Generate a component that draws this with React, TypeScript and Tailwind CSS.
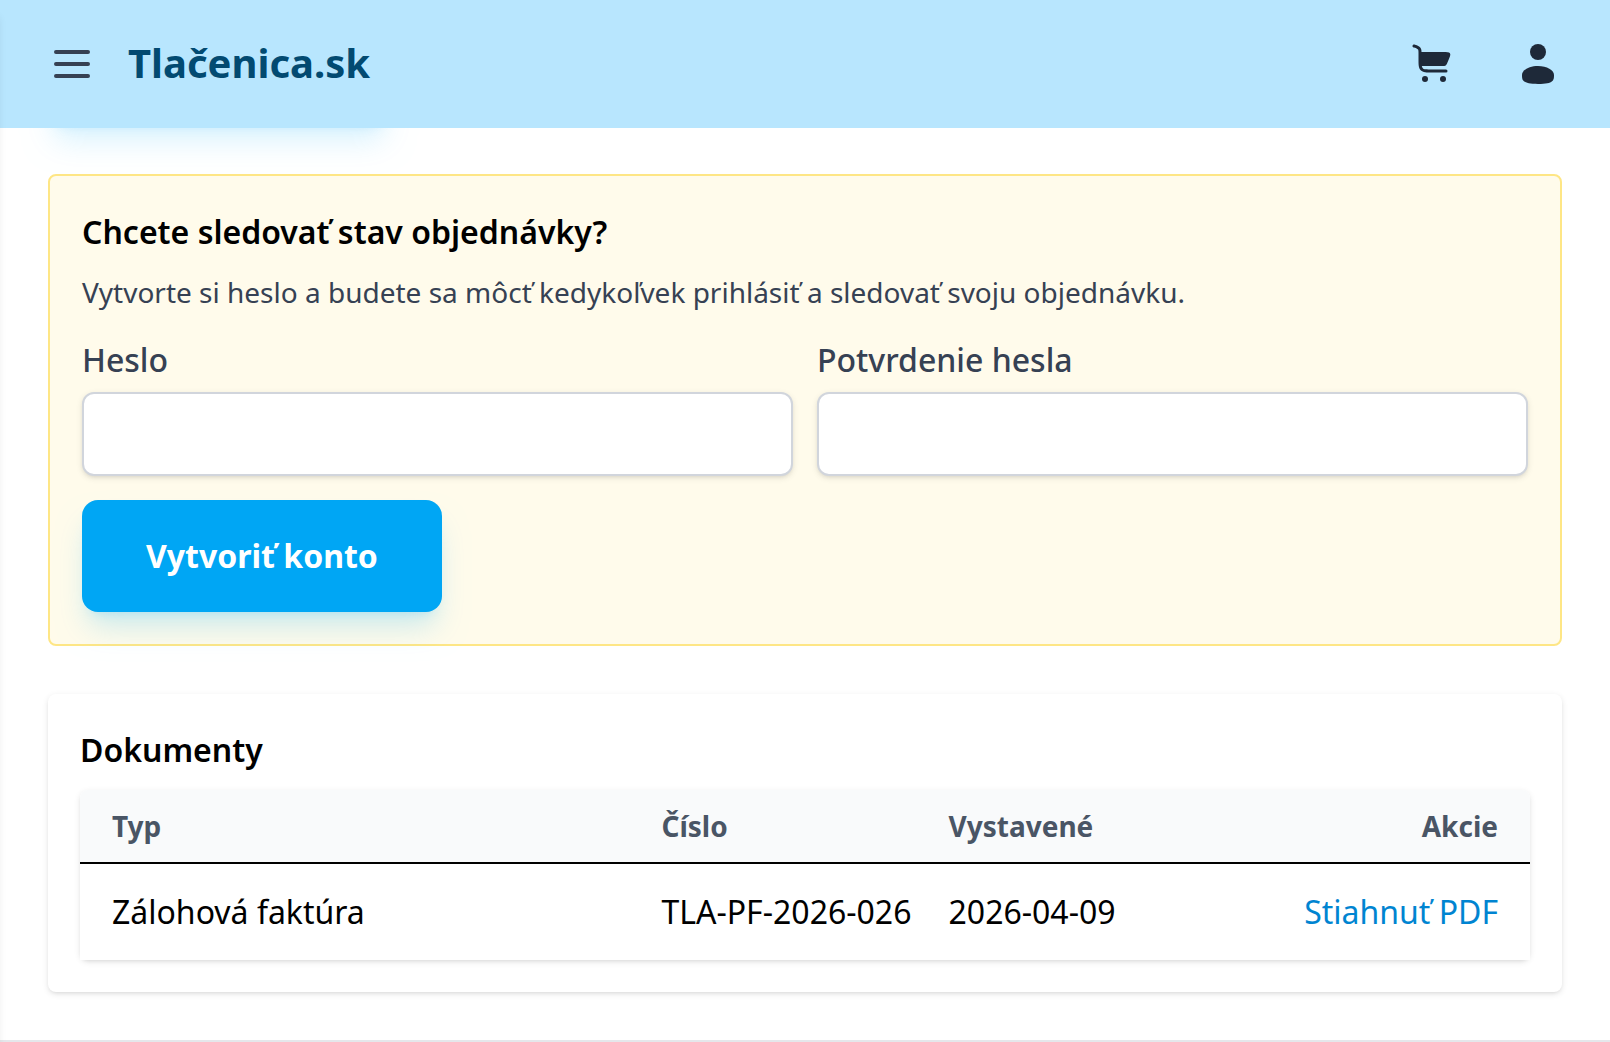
import React, { useState } from "react";

const documents = [
  {
    id: 1,
    type: "Zálohová faktúra",
    number: "TLA-PF-2026-026",
    issued: "2026-04-09",
    href: "#pdf",
  },
];

function MenuIcon() {
  return (
    <svg
      className="size-12"
      viewBox="0 0 24 24"
      fill="none"
      stroke="currentColor"
      strokeWidth="2"
      strokeLinecap="round"
    >
      <path d="M4 6h16M4 12h16M4 18h16" />
    </svg>
  );
}

function CartIcon() {
  return (
    <svg className="size-12" viewBox="0 0 24 24" fill="currentColor">
      <path d="M2.237 2.288a.75.75 0 1 0-.474 1.423l.265.089c.676.225 1.124.376 1.453.529c.312.145.447.262.533.382s.155.284.194.626c.041.361.042.833.042 1.546v2.672c0 1.367 0 2.47.117 3.337c.12.9.38 1.658.982 2.26c.601.602 1.36.86 2.26.981c.866.117 1.969.117 3.336.117H18a.75.75 0 0 0 0-1.5h-7c-1.435 0-2.436-.002-3.192-.103c-.733-.099-1.122-.28-1.399-.556c-.235-.235-.4-.551-.506-1.091h10.12c.959 0 1.438 0 1.814-.248s.565-.688.943-1.57l.428-1c.81-1.89 1.215-2.834.77-3.508S18.506 6 16.45 6H5.745a9 9 0 0 0-.047-.833c-.055-.485-.176-.93-.467-1.333c-.291-.404-.675-.66-1.117-.865c-.417-.194-.946-.37-1.572-.58z" />
      <circle cx="7.5" cy="19.5" r="1.5" />
      <circle cx="16.5" cy="19.5" r="1.5" />
    </svg>
  );
}

function UserIcon() {
  return (
    <svg className="size-12" viewBox="0 0 24 24" fill="currentColor">
      <circle cx="12" cy="6" r="4" />
      <path d="M20 17.5c0 2.485 0 4.5-8 4.5s-8-2.015-8-4.5S7.582 13 12 13s8 2.015 8 4.5" />
    </svg>
  );
}

function Header() {
  return (
    <header className="sticky top-0 z-10 flex h-32 items-center bg-sky-200 px-12">
      <button type="button" aria-label="Menu" className="text-gray-700">
        <MenuIcon />
      </button>
      <a href="#home" className="ml-8 pb-0.5 text-[40px] leading-14 font-bold text-sky-900">
        Tlačenica.sk
      </a>
      <div className="ml-auto flex items-center gap-14 text-gray-800">
        <a href="#cart" aria-label="Košík">
          <CartIcon />
        </a>
        <a href="#account" aria-label="Konto">
          <UserIcon />
        </a>
      </div>
    </header>
  );
}

function PasswordField({ id, label }: { id: string; label: string }) {
  const [value, setValue] = useState("");

  return (
    <div>
      <label htmlFor={id} className="block text-[32px] leading-12 font-medium text-gray-700">
        {label}
      </label>
      <input
        id={id}
        type="password"
        value={value}
        onChange={(e) => setValue(e.target.value)}
        className="mt-2 block h-21 w-full rounded-xl border-2 border-gray-300 bg-white px-6 text-[32px] shadow-[0_2px_6px_rgb(0_0_0/0.1),0_2px_4px_-2px_rgb(0_0_0/0.1)]"
      />
    </div>
  );
}

export default function App() {
  return (
    <div className="min-h-screen bg-white font-['Noto_Sans',sans-serif] text-black">
      {/* closed side menu, only its shadow reaches the page */}
      <div className="fixed inset-y-0 right-full z-20 w-80 bg-white shadow-[0_16px_8px_-1px_rgb(0_0_0/0.08)]" />

      <Header />

      <main className="px-12 pb-12">
        {/* end of the order summary, tucked under the sticky header */}
        <div className="-mt-[114px] h-28 w-[342px] rounded-2xl bg-sky-500 shadow-[0_20px_30px_-6px,0_8px_12px_-8px] shadow-sky-500/15" />

        <section className="mt-12 rounded-lg border-2 border-amber-200 bg-amber-50 p-8">
          <h2 className="text-[32px] leading-12 font-semibold">
            Chcete sledovať stav objednávky?
          </h2>
          <p className="mt-4 text-[28px] leading-10 text-gray-700">
            Vytvorte si heslo a budete sa môcť kedykoľvek prihlásiť a sledovať svoju objednávku.
          </p>
          <form className="mt-6" onSubmit={(e) => e.preventDefault()}>
            <div className="grid grid-cols-2 gap-6">
              <PasswordField id="password" label="Heslo" />
              <PasswordField id="password-confirm" label="Potvrdenie hesla" />
            </div>
            <button
              type="submit"
              className="mt-6 block rounded-2xl bg-sky-500 px-16 py-8 text-[32px] leading-12 font-bold text-white shadow-[0_20px_30px_-6px,0_8px_12px_-8px] shadow-sky-500/20"
            >
              Vytvoriť konto
            </button>
          </form>
        </section>

        <section className="mt-12 rounded-lg bg-white p-8 shadow-[0_2px_6px_rgb(0_0_0/0.1),0_2px_4px_-2px_rgb(0_0_0/0.1)]">
          <h2 className="text-[32px] leading-12 font-semibold">Dokumenty</h2>
          <table className="mt-4 w-full table-fixed border-separate border-spacing-0 rounded-lg text-left shadow-[0_2px_6px_rgb(0_0_0/0.1),0_2px_4px_-2px_rgb(0_0_0/0.1)]">
            <colgroup>
              <col className="w-[40.1%]" />
              <col className="w-[19.8%]" />
              <col className="w-[20%]" />
              <col />
            </colgroup>
            <thead className="text-[28px] leading-10 text-gray-600">
              <tr>
                <th className="rounded-tl-lg border-b-2 border-black bg-gray-50 py-4 pl-8 font-bold">Typ</th>
                <th className="border-b-2 border-black bg-gray-50 py-4 font-bold">Číslo</th>
                <th className="border-b-2 border-black bg-gray-50 py-4 font-bold">Vystavené</th>
                <th className="rounded-tr-lg border-b-2 border-black bg-gray-50 py-4 pr-8 text-right font-bold">Akcie</th>
              </tr>
            </thead>
            <tbody className="text-[32px] leading-12">
              {documents.map((item) => (
                <tr key={item.id} className="bg-white">
                  <td className="py-6 pl-8">{item.type}</td>
                  <td className="py-6">{item.number}</td>
                  <td className="py-6">{item.issued}</td>
                  <td className="py-6 pr-8 text-right">
                    <a href={item.href} className="text-sky-600">
                      Stiahnuť PDF
                    </a>
                  </td>
                </tr>
              ))}
            </tbody>
          </table>
        </section>
      </main>

      <footer className="border-t-2 border-gray-200" />
    </div>
  );
}
